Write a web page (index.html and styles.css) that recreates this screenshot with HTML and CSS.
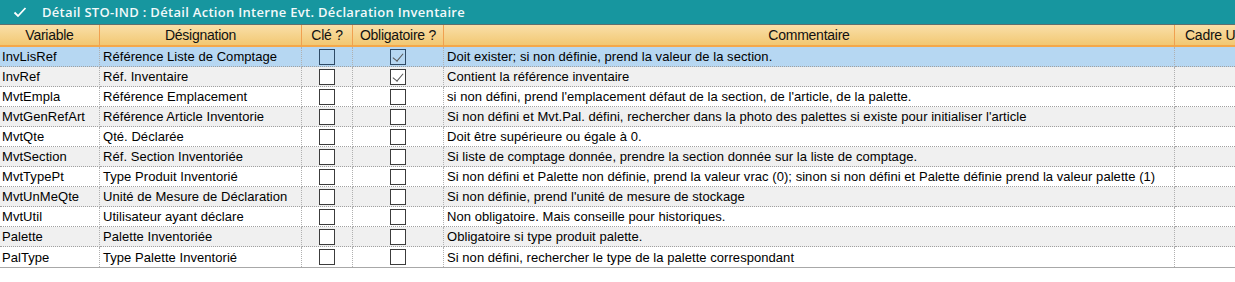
FILE: index.html
```html
<!DOCTYPE html>
<html lang="fr">
<head>
<meta charset="utf-8">
<link rel="stylesheet" href="styles.css">
</head>
<body>
<div class="panel">
  <div class="titlebar">
    <svg class="chk" width="14" height="12" viewBox="0 0 14 12"><path d="M1.5 6.5 L5 10 L12.5 2" fill="none" stroke="#fff" stroke-width="1.8"/></svg>
    <span class="title">Détail STO-IND : Détail Action Interne Evt. Déclaration Inventaire</span>
  </div>
  <div class="grid">
    <div class="hd">Variable</div>
    <div class="hd">Désignation</div>
    <div class="hd">Clé ?</div>
    <div class="hd">Obligatoire ?</div>
    <div class="hd">Commentaire</div>
    <div class="hd hd-left">Cadre U</div>

    <div class="row sel">
      <div class="c">InvLisRef</div><div class="c">Référence Liste de Comptage</div>
      <div class="c cb"><span class="box"></span></div><div class="c cb"><span class="box on"></span></div>
      <div class="c">Doit exister; si non définie, prend la valeur de la section.</div><div class="c"></div>
    </div>
    <div class="row alt">
      <div class="c">InvRef</div><div class="c">Réf. Inventaire</div>
      <div class="c cb"><span class="box"></span></div><div class="c cb"><span class="box on"></span></div>
      <div class="c">Contient la référence inventaire</div><div class="c"></div>
    </div>
    <div class="row">
      <div class="c">MvtEmpla</div><div class="c">Référence Emplacement</div>
      <div class="c cb"><span class="box"></span></div><div class="c cb"><span class="box"></span></div>
      <div class="c">si non défini, prend l'emplacement défaut de la section, de l'article, de la palette.</div><div class="c"></div>
    </div>
    <div class="row alt">
      <div class="c">MvtGenRefArt</div><div class="c">Référence Article Inventorie</div>
      <div class="c cb"><span class="box"></span></div><div class="c cb"><span class="box"></span></div>
      <div class="c">Si non défini et Mvt.Pal. défini, rechercher dans la photo des palettes si existe pour initialiser l'article</div><div class="c"></div>
    </div>
    <div class="row">
      <div class="c">MvtQte</div><div class="c">Qté. Déclarée</div>
      <div class="c cb"><span class="box"></span></div><div class="c cb"><span class="box"></span></div>
      <div class="c">Doit être supérieure ou égale à 0.</div><div class="c"></div>
    </div>
    <div class="row alt">
      <div class="c">MvtSection</div><div class="c">Réf. Section Inventoriée</div>
      <div class="c cb"><span class="box"></span></div><div class="c cb"><span class="box"></span></div>
      <div class="c">Si liste de comptage donnée, prendre la section donnée sur la liste de comptage.</div><div class="c"></div>
    </div>
    <div class="row">
      <div class="c">MvtTypePt</div><div class="c">Type Produit Inventorié</div>
      <div class="c cb"><span class="box"></span></div><div class="c cb"><span class="box"></span></div>
      <div class="c">Si non défini et Palette non définie, prend la valeur vrac (0); sinon si non défini et Palette définie prend la valeur palette (1)</div><div class="c"></div>
    </div>
    <div class="row alt">
      <div class="c">MvtUnMeQte</div><div class="c">Unité de Mesure de Déclaration</div>
      <div class="c cb"><span class="box"></span></div><div class="c cb"><span class="box"></span></div>
      <div class="c">Si non définie, prend l'unité de mesure de stockage</div><div class="c"></div>
    </div>
    <div class="row">
      <div class="c">MvtUtil</div><div class="c">Utilisateur ayant déclare</div>
      <div class="c cb"><span class="box"></span></div><div class="c cb"><span class="box"></span></div>
      <div class="c">Non obligatoire. Mais conseille pour historiques.</div><div class="c"></div>
    </div>
    <div class="row alt">
      <div class="c">Palette</div><div class="c">Palette Inventoriée</div>
      <div class="c cb"><span class="box"></span></div><div class="c cb"><span class="box"></span></div>
      <div class="c">Obligatoire si type produit palette.</div><div class="c"></div>
    </div>
    <div class="row last">
      <div class="c">PalType</div><div class="c">Type Palette Inventorié</div>
      <div class="c cb"><span class="box"></span></div><div class="c cb"><span class="box"></span></div>
      <div class="c">Si non défini, rechercher le type de la palette correspondant</div><div class="c"></div>
    </div>
  </div>
</div>
</body>
</html>
```
FILE: styles.css
```css
* { box-sizing: border-box; }
html, body { margin: 0; padding: 0; background: #fff; }
body { font-family: "Liberation Sans", Arial, sans-serif; font-size: 13px; letter-spacing: 0.05px; color: #000; overflow: hidden; }

.panel { width: 1235px; }

.titlebar {
  height: 25px;
  background: #17969f;
  border-bottom: 1px solid #5f6f6f;
  display: flex;
  align-items: center;
  padding-left: 13px;
  gap: 15px;
  color: #fff;
}
.title { font-family: "Open Sans", "Noto Sans", sans-serif; font-size: 13px; font-weight: 600; letter-spacing: 0.3px; opacity: 0.95; }

.grid {
  display: grid;
  grid-template-columns: 100px 202px 51px 91px 731px 1fr;
  border-bottom: 1px solid #a8a8a8;
}

.hd {
  height: 22px;
  background: linear-gradient(#f9dfa8, #f2c873);
  border-right: 1px solid #f0a050;
  border-bottom: 2px solid #f4a84a;
  display: flex;
  align-items: center;
  justify-content: center;
  font-size: 14px;
  color: #111;
  letter-spacing: -0.25px;
  white-space: nowrap;
  overflow: hidden;
}
.hd-left { justify-content: flex-start; padding-left: 10px; border-right: none; }

.row { display: contents; }
.c {
  height: 20px;
  border-right: 1px dotted #b0b0b0;
  border-bottom: 1px dotted #a0a0a0;
  padding-left: 2px;
  display: flex;
  align-items: center;
  white-space: nowrap;
  overflow: hidden;
}
.c:last-child { border-right: none; }
.c:nth-child(2), .c:nth-child(5) { padding-left: 3px; }
.alt .c { background: #f0f0f0; }
.sel .c { background: #b6d7f2; }
.last .c { border-bottom: none; }

.cb { justify-content: center; padding-left: 0 !important; }
.box {
  width: 16px;
  height: 16px;
  border: 1px solid #3c3c3c;
  background: #fff;
  position: relative;
}
.sel .box { background: #b6d7f2; border-color: #2e4a66; }
.box.on::after {
  content: "";
  position: absolute;
  left: 4px;
  top: 1px;
  width: 5px;
  height: 9px;
  border-right: 1.5px solid #555;
  border-bottom: 1.5px solid #555;
  transform: rotate(40deg);
}
```
